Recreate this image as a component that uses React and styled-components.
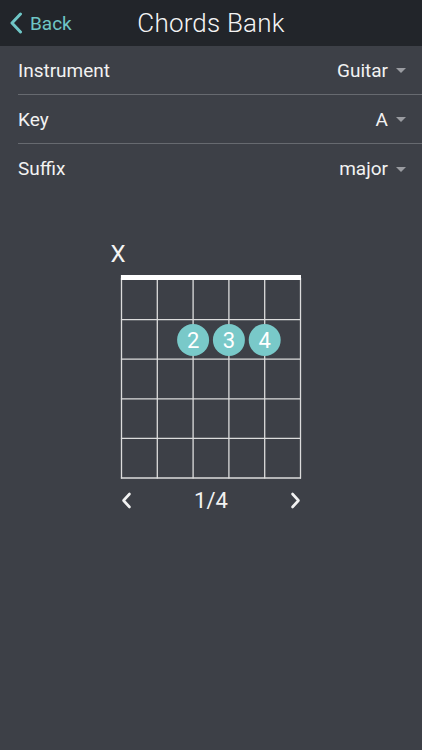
import React from "react";
import styled, { createGlobalStyle } from "styled-components";

const Global = createGlobalStyle`
  html, body { margin: 0; padding: 0; background: #3d4047; }
  body { font-family: Roboto, "Noto Sans", "Liberation Sans", sans-serif; }
  * { box-sizing: border-box; }
`;

const Screen = styled.div`
  width: 422px;
  min-height: 750px;
  background: #3d4047;
  color: #f2f2f2;
  display: flex;
  flex-direction: column;
`;

const Header = styled.header`
  height: 46px;
  background: #22252a;
  display: grid;
  grid-template-columns: 1fr auto 1fr;
  align-items: center;
`;

const BackButton = styled.button`
  justify-self: start;
  display: flex;
  align-items: center;
  gap: 7px;
  margin-left: 9px;
  padding: 0;
  background: none;
  border: none;
  color: #6fc6c6;
  font-family: Roboto, "Noto Sans", sans-serif;
  font-size: 19px;
  cursor: pointer;
`;

const Title = styled.h1`
  margin: 0;
  font-size: 26px;
  font-weight: 300;
  color: #f4f4f4;
  letter-spacing: 0.2px;
`;

const Settings = styled.div`
  display: flex;
  flex-direction: column;
  padding-left: 18px;
`;

const Row = styled.div`
  height: 49px;
  display: flex;
  align-items: center;
  justify-content: space-between;
  padding-right: 16px;
  border-bottom: ${(p) => (p.$last ? "none" : "1px solid #676a70")};
  font-size: 19px;
`;

const Label = styled.span`
  color: #f2f2f2;
`;

const Value = styled.span`
  display: flex;
  align-items: center;
  gap: 8px;
  color: #f2f2f2;
`;

const Caret = styled.span`
  width: 0;
  height: 0;
  border-left: 5px solid transparent;
  border-right: 5px solid transparent;
  border-top: 5px solid #9a9ca1;
  margin-top: 1px;
`;

const ChordArea = styled.section`
  margin-top: 43px;
  display: flex;
  flex-direction: column;
  align-items: center;
`;

const Pager = styled.div`
  width: 180px;
  height: 40px;
  display: flex;
  align-items: center;
  justify-content: space-between;
  font-size: 22px;
  color: #f2f2f2;
`;

const PageButton = styled.span`
  display: flex;
  align-items: center;
`;

const Chevron = ({ dir }) => (
  <svg width="11" height="17" viewBox="0 0 11 17">
    <path
      d={dir === "left" ? "M8.5 2 L2.5 8.5 L8.5 15" : "M2.5 2 L8.5 8.5 L2.5 15"}
      fill="none"
      stroke="#f2f2f2"
      strokeWidth="2.6"
      strokeLinecap="round"
      strokeLinejoin="round"
    />
  </svg>
);

const strings = [0, 1, 2, 3, 4, 5].map((i) => 20.5 + i * 35.8);
const frets = [44, 83.6, 123.2, 162.8, 202.4, 242];
const dots = [
  { x: strings[2], n: 2 },
  { x: strings[3], n: 3 },
  { x: strings[4], n: 4 },
];

const ChordDiagram = () => (
  <svg width="220" height="244" viewBox="0 0 220 244">
    <text x="17" y="26" textAnchor="middle" fill="#f4f4f4" fontSize="24" fontFamily="Roboto, sans-serif">X</text>
    {strings.map((x) => (
      <line key={"s" + x} x1={x} y1={42} x2={x} y2={242.6} stroke="#dcdcdc" strokeWidth="1.3" />
    ))}
    {frets.slice(1).map((y) => (
      <line key={"f" + y} x1={19.9} y1={y} x2={200} y2={y} stroke="#dcdcdc" strokeWidth="1.3" />
    ))}
    <rect x="19.9" y="39" width="180.1" height="5" fill="#ffffff" />
    {dots.map((d) => (
      <g key={d.n}>
        <circle cx={d.x} cy="104" r="16" fill="#79c9c9" />
        <text x={d.x} y="112" textAnchor="middle" fill="#ffffff" fontSize="22" fontFamily="Roboto, sans-serif">
          {d.n}
        </text>
      </g>
    ))}
  </svg>
);

export default function App() {
  return (
    <>
      <Global />
      <Screen>
        <Header>
          <BackButton>
            <svg width="14" height="22" viewBox="0 0 14 22">
              <path d="M11.5 2 L3 11 L11.5 20" fill="none" stroke="#6fc6c6" strokeWidth="3" strokeLinecap="round" strokeLinejoin="round" />
            </svg>
            Back
          </BackButton>
          <Title>Chords Bank</Title>
          <span />
        </Header>
        <Settings>
          <Row>
            <Label>Instrument</Label>
            <Value>Guitar<Caret /></Value>
          </Row>
          <Row>
            <Label>Key</Label>
            <Value>A<Caret /></Value>
          </Row>
          <Row $last>
            <Label>Suffix</Label>
            <Value>major<Caret /></Value>
          </Row>
        </Settings>
        <ChordArea>
          <ChordDiagram />
          <Pager>
            <PageButton><Chevron dir="left" /></PageButton>
            <span>1/4</span>
            <PageButton><Chevron dir="right" /></PageButton>
          </Pager>
        </ChordArea>
      </Screen>
    </>
  );
}
